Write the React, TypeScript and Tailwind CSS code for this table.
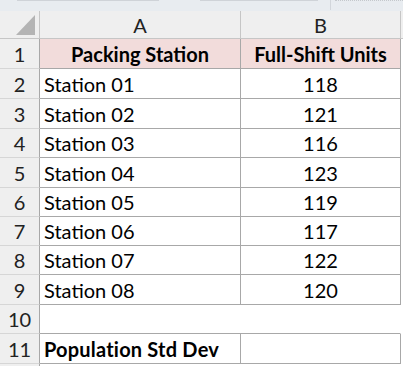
import React from "react";

type Row = { n: number; a: string; b: string; h: string; kind?: "head" | "blank" | "total" };

const rows: Row[] = [
  { n: 1, a: "Packing Station", b: "Full-Shift Units", h: "h-[30px]", kind: "head" },
  { n: 2, a: "Station 01", b: "118", h: "h-[30px]" },
  { n: 3, a: "Station 02", b: "121", h: "h-[30px]" },
  { n: 4, a: "Station 03", b: "116", h: "h-[29px]" },
  { n: 5, a: "Station 04", b: "123", h: "h-[30px]" },
  { n: 6, a: "Station 05", b: "119", h: "h-[29px]" },
  { n: 7, a: "Station 06", b: "117", h: "h-[29px]" },
  { n: 8, a: "Station 07", b: "122", h: "h-[29px]" },
  { n: 9, a: "Station 08", b: "120", h: "h-[30px]" },
  { n: 10, a: "", b: "", h: "h-[29px]", kind: "blank" },
  { n: 11, a: "Population Std Dev", b: "", h: "h-[30px]", kind: "total" },
];

const font = { fontFamily: "Lato, 'Liberation Sans', sans-serif" };

export default function App() {
  return (
    <div className="w-[403px] h-[366px] overflow-hidden bg-white text-[20px] text-black" style={font}>
      {/* formula bar remnant */}
      <div className="h-[11px] bg-[#e8ecf0] flex items-start">
        <div className="ml-[17px] w-[142px] h-px bg-[#cfd3d8]" />
        <div className="ml-[41px] w-[118px] h-px bg-[#cfd3d8]" />
        <div className="ml-[12px] w-px h-[10px] bg-[#d2d6db]" />
        <div className="ml-[4px] flex-1 h-px border-t border-dotted border-[#c4c8cc]" />
      </div>

      {/* column headers */}
      <div className="h-[28px] flex bg-[#efefef] border-b border-[#c6c6c6] text-[#222]">
        <div className="w-[40px] border-r border-[#c6c6c6] flex items-end justify-end pr-[4px] pb-[3px]">
          <svg width="19" height="20" viewBox="0 0 19 20">
            <polygon points="19,0 19,20 0,20" fill="#b4b4b4" />
          </svg>
        </div>
        <div className="w-[201px] border-r border-[#c6c6c6] flex items-center justify-center leading-none">A</div>
        <div className="w-[160px] border-r border-[#c6c6c6] flex items-center justify-center leading-none">B</div>
        <div className="flex-1" />
      </div>

      {rows.map((r) => {
        const head = r.kind === "head";
        const blank = r.kind === "blank";
        const total = r.kind === "total";
        return (
          <div key={r.n} className={`${r.h} flex`}>
            <div className="w-[40px] bg-[#efefef] border-r border-r-[#a8a8a8] border-b border-b-[#d6d6d6] flex items-center justify-center text-[#222] leading-none">
              {r.n}
            </div>
            <div
              className={`w-[201px] border-b border-[#a8a8a8] flex items-center leading-none ${
                blank ? "" : "border-r"
              } ${head ? "bg-[#f2dcdb] justify-center font-bold" : "pl-[4px]"} ${total ? "font-bold tracking-[0.2px]" : ""}`}
            >
              {r.a}
            </div>
            <div
              className={`w-[160px] border-b border-[#a8a8a8] flex items-center justify-center leading-none ${
                blank ? "border-r border-r-white" : "border-r"
              } ${head ? "bg-[#f2dcdb] font-bold" : ""}`}
            >
              {r.b}
            </div>
            <div className="flex-1" />
          </div>
        );
      })}
      <div className="h-[2px] flex">
        <div className="w-[40px] bg-[#efefef] border-r border-[#a8a8a8]" />
      </div>
    </div>
  );
}
